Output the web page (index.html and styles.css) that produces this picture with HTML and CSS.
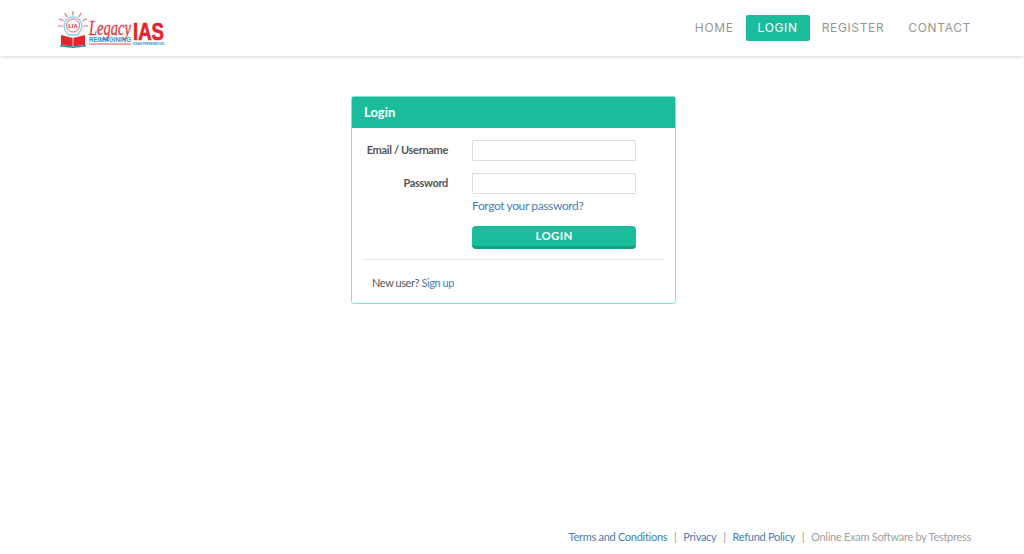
FILE: index.html
```html
<!DOCTYPE html>
<html lang="en">
<head>
<meta charset="utf-8">
<title>Login</title>
<link rel="stylesheet" href="styles.css">
</head>
<body>
<div class="page">
  <header class="topbar">
    <a class="logo" href="#">
      <svg class="logo-svg" width="108" height="38" viewBox="0 0 108 38" aria-label="Legacy IAS">
        <g stroke="#f0656a" stroke-width="1.200" fill="none" stroke-linecap="round">
          <path d="M15 .5v3.500M7 2.500l2 3M23 2.500l-2 3M1.500 8l3.500 1.500M28.500 8l-3.500 1.500M.5 15h3.500M26 15h3.500"/>
        </g>
        <path d="M10 24c-.5-2.500-4-4.500-4-9a9 9 0 0 1 18 0c0 4.500-3.500 6.500-4 9z" fill="#fff" stroke="#8ccdf0" stroke-width="1.400"/>
        <circle cx="15" cy="14.500" r="6.500" fill="#fff" stroke="#e8585d" stroke-width=".9"/>
        <text x="15" y="17" class="logo-lia">LIA</text>
        <path d="M3 24l12 3 12-3v10l-12 1.500L3 34z" fill="#e3262e"/>
        <path d="M2 34l13 1.500L28 34v1.500L15 37 2 35.500z" fill="#1b88c9"/>
        <path d="M15 27v8" stroke="#fff" stroke-width=".8"/>
        <text x="31" y="24" class="logo-script" textLength="42" lengthAdjust="spacingAndGlyphs">Legacy</text>
        <text x="31" y="31" class="logo-sub" textLength="42" lengthAdjust="spacingAndGlyphs">REIMAGINING</text>
        <rect x="31" y="32" width="42" height="2" fill="#f2a5a8"/>
        <text x="75" y="29" class="logo-ias" textLength="31" lengthAdjust="spacingAndGlyphs">IAS</text>
        <text x="75" y="34" class="logo-tag" textLength="31" lengthAdjust="spacingAndGlyphs">EXAM PREPARATION</text>
      </svg>
    </a>
    <nav class="nav">
      <a class="nav-link" href="#">HOME</a>
      <a class="nav-link nav-active" href="#">LOGIN</a>
      <a class="nav-link" href="#">REGISTER</a>
      <a class="nav-link" href="#">CONTACT</a>
    </nav>
  </header>

  <main class="content">
    <section class="card">
      <h1 class="card-title">Login</h1>
      <form class="card-body">
        <div class="row">
          <label class="label" for="email">Email / Username</label>
          <input class="input" id="email" type="text">
        </div>
        <div class="row row-pass">
          <label class="label" for="pass">Password</label>
          <input class="input" id="pass" type="password">
        </div>
        <div class="offset"><a class="link" href="#">Forgot your password?</a></div>
        <div class="offset offset-btn"><button class="btn" type="button">LOGIN</button></div>
        <hr class="rule">
        <p class="signup">New user? <a class="link" href="#">Sign up</a></p>
      </form>
    </section>
  </main>

  <footer class="footer">
    <a class="link" href="#">Terms and Conditions</a><span class="sep">|</span><a class="link" href="#">Privacy</a><span class="sep">|</span><a class="link" href="#">Refund Policy</a><span class="sep">|</span><span class="muted">Online Exam Software by Testpress</span>
  </footer>
</div>
</body>
</html>
```
FILE: styles.css
```css
* { box-sizing: border-box; }
html, body { margin: 0; height: 100%; }
body { font-family: Lato, "Liberation Sans", sans-serif; color: #555; background: #fff; font-size: 12px; }
.page { height: 554px; display: flex; flex-direction: column; overflow: hidden; }
.topbar { height: 56px; flex: none; display: flex; align-items: center; justify-content: space-between; padding: 0 41px 0 58px; background: #fff; box-shadow: 0 1px 4px rgba(0,0,0,.16); }
.logo { display: block; height: 38px; margin-top: 3px; }
.logo-svg { display: block; overflow: visible; }
.logo-lia { font: 700 6px "Liberation Sans", sans-serif; fill: #d8323a; text-anchor: middle; }
.logo-script { font: italic 400 21px "Liberation Serif", serif; fill: #e3343a; stroke: #e3343a; stroke-width: .3px; }
.logo-sub { font: 700 7px "Liberation Sans", sans-serif; fill: #2a93d2; }
.logo-ias { font: 700 23px "Liberation Sans", sans-serif; fill: #e3262e; stroke: #e3262e; stroke-width: .7px; }
.logo-tag { font: 700 3.200px "Liberation Sans", sans-serif; fill: #2a93d2; }
.nav { display: flex; align-items: center; }
.nav-link { font: 400 12px Inter, "Liberation Sans", sans-serif; letter-spacing: .65px; color: #969696; text-decoration: none; height: 26px; line-height: 26px; padding: 0 12px; border-radius: 2px; }
.nav-active { background: #1abc9c; color: #fff; }
.content { flex: 1; display: flex; justify-content: center; align-items: flex-start; padding-top: 40px; }
.card { width: 325px; height: 208px; border: 1px solid #7ce6cd; border-radius: 3px; margin-left: 3px; }
.card-title { margin: 0; height: 31px; line-height: 30px; background: #1abc9c; color: #fff; font-size: 13px; font-weight: 700; padding-left: 12px; }
.card-body { padding: 12px 12px 0; }
.row { display: flex; align-items: center; height: 21px; }
.row-pass { margin-top: 12px; }
.label { width: 84px; margin: 0 24px 2px 0; text-align: right; font-weight: 700; font-size: 11px; letter-spacing: -.33px; white-space: nowrap; color: #555; }
.input { width: 164px; height: 21px; border: 1px solid #ddd; background: #fff; padding: 0 4px; border-radius: 1px; }
.offset { margin-left: 108px; }
.offset .link { font-size: 12px; letter-spacing: -.38px; line-height: 24px; display: block; }
.offset-btn { margin-top: 8px; }
.btn { display: block; width: 164px; height: 23px; background: #1abc9c; border: 0; border-bottom: 3px solid #12a085; border-radius: 4px; color: #fff; font: 700 11.500px Lato, sans-serif; letter-spacing: .3px; padding: 0 0 2px; }
.rule { margin: 10px 0 0; border: 0; border-top: 1px solid #e8e8e8; }
.signup { margin: 16px 0 0 8px; line-height: 14px; font-size: 11px; letter-spacing: -.42px; color: #555; }
.link { color: #4a7db5; text-decoration: none; }
.footer { flex: none; height: 34px; padding: 0 53px 0 0; text-align: right; font-size: 11px; letter-spacing: -.28px; line-height: 34px; }
.sep { color: #999; margin: 0 6.800px; }
.muted { color: #a0a0a0; }
```
